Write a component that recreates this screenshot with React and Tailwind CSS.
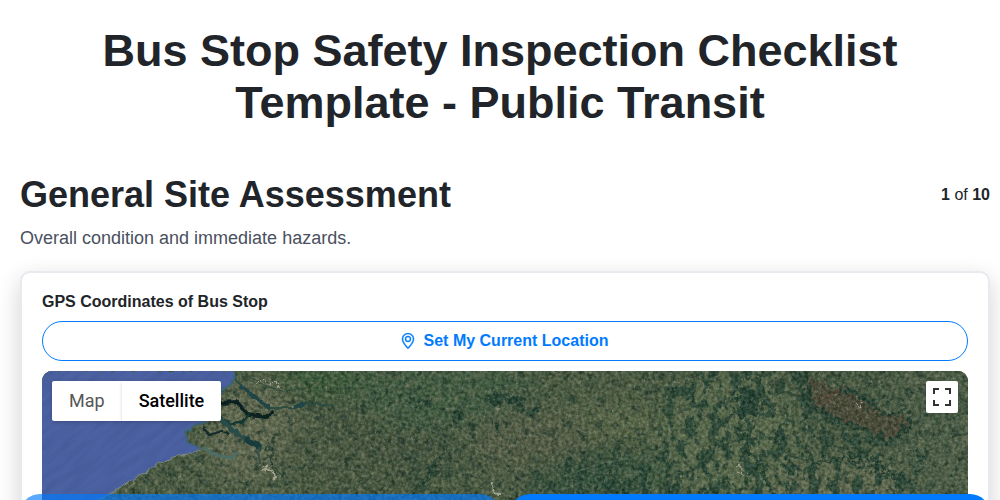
import React from 'react'
import { useState } from "react";
import { BsGeoAlt } from "react-icons/bs";

const SatelliteImage = () => {
  return (
    <svg
      className="block h-full w-full"
      viewBox="0 0 926 400"
      preserveAspectRatio="xMidYMin slice"
      aria-hidden="true"
    >
      <defs>
        {/* woods, fields, towns and grain, each one cut from noise */}
        <filter id="woods" x="0" y="0" width="100%" height="100%" colorInterpolationFilters="sRGB">
          <feTurbulence type="fractalNoise" baseFrequency="0.11 0.12" numOctaves="4" seed="7" />
          <feColorMatrix values="0 0 0 0 0.13  0 0 0 0 0.22  0 0 0 0 0.18  9 0 0 0 -5.2" />
        </filter>
        <filter id="deepWoods" x="0" y="0" width="100%" height="100%" colorInterpolationFilters="sRGB">
          <feTurbulence type="fractalNoise" baseFrequency="0.09 0.065" numOctaves="4" seed="32" />
          <feColorMatrix values="0 0 0 0 0.1  0 0 0 0 0.23  0 0 0 0 0.19  14 0 0 0 -7.2" />
        </filter>
        <filter id="fields" x="0" y="0" width="100%" height="100%" colorInterpolationFilters="sRGB">
          <feTurbulence type="fractalNoise" baseFrequency="0.12" numOctaves="4" seed="21" />
          <feColorMatrix values="0 0 0 0 0.43  0 0 0 0 0.45  0 0 0 0 0.34  0 5 0 0 -2.4" />
        </filter>
        <filter id="grain" x="0" y="0" width="100%" height="100%" colorInterpolationFilters="sRGB">
          <feTurbulence type="fractalNoise" baseFrequency="0.3" numOctaves="3" seed="3" />
          <feColorMatrix values="1.3 0 0 0 -0.37  1.2 0.1 0 0 -0.31  1.2 0 0.1 0 -0.39  0 0 0 0 0.26" />
        </filter>
        <filter id="towns" x="0" y="0" width="100%" height="100%" colorInterpolationFilters="sRGB">
          <feTurbulence type="fractalNoise" baseFrequency="0.22" numOctaves="3" seed="11" />
          <feColorMatrix values="0 0 0 0 0.56  0 0 0 0 0.54  0 0 0 0 0.48  0 0 8 0 -5.5" />
        </filter>
        <filter id="waves" x="0" y="0" width="100%" height="100%" colorInterpolationFilters="sRGB">
          <feTurbulence type="fractalNoise" baseFrequency="0.03 0.16" numOctaves="3" seed="5" />
          <feColorMatrix values="0 0 0 0 0.22  0 0 0 0 0.3  0 0 0 0 0.52  2 0 0 0 -0.8" />
        </filter>
        <filter id="rough" x="-10%" y="-10%" width="120%" height="120%" colorInterpolationFilters="sRGB">
          <feTurbulence type="fractalNoise" baseFrequency="0.14" numOctaves="3" seed="9" result="n" />
          <feDisplacementMap in="SourceGraphic" in2="n" scale="18" xChannelSelector="R" yChannelSelector="G" />
        </filter>
        <filter id="coast" x="-10%" y="-10%" width="120%" height="120%" colorInterpolationFilters="sRGB">
          <feTurbulence type="fractalNoise" baseFrequency="0.15" numOctaves="2" seed="4" result="n" />
          <feDisplacementMap in="SourceGraphic" in2="n" scale="5" xChannelSelector="R" yChannelSelector="G" />
        </filter>
        <filter id="soft" x="-20%" y="-20%" width="140%" height="140%">
          <feGaussianBlur stdDeviation="12" />
        </filter>
        <clipPath id="sea">
          <path d="M0 0H190L193 7L188 14L180 20L172 35L166 50L151 55L143 62L146 71L158 78L150 82L131 86L118 92L98 104L75 119L60 127L0 165Z" />
        </clipPath>
        {/* where the forests are thick */}
        <mask id="forests" maskUnits="userSpaceOnUse" x="0" y="0" width="926" height="400">
          <g filter="url(#soft)">
            <path d="M625 -20H775L790 40L850 70L880 120V200H620L600 100Z" fill="#fff" />
            <path d="M500 95L560 80H640V200H450Z" fill="#fff" />
            <ellipse cx="820" cy="40" rx="60" ry="30" fill="#999" />
            <ellipse cx="390" cy="105" rx="30" ry="40" fill="#888" />
          </g>
        </mask>
      </defs>

      <rect width="926" height="400" fill="#4a5b43" />
      <g filter="url(#soft)">
        <ellipse cx="290" cy="8" rx="60" ry="14" fill="#315a35" />
        <ellipse cx="210" cy="60" rx="50" ry="50" fill="#6b6f56" />
        <ellipse cx="330" cy="80" rx="90" ry="50" fill="#46563f" />
        <ellipse cx="400" cy="20" rx="90" ry="40" fill="#3f5c43" />
        <ellipse cx="490" cy="70" rx="60" ry="30" fill="#585f4a" />
        <ellipse cx="570" cy="110" rx="80" ry="28" fill="#35533d" />
        <ellipse cx="590" cy="50" rx="60" ry="14" fill="#626e4b" />
        <ellipse cx="690" cy="70" rx="70" ry="70" fill="#5d6e50" />
        <ellipse cx="800" cy="115" rx="70" ry="30" fill="#686f54" />
        <ellipse cx="890" cy="60" rx="50" ry="70" fill="#4e5f4a" />
      </g>
      <rect width="926" height="400" filter="url(#fields)" opacity="0.45" />
      <rect width="926" height="400" filter="url(#woods)" opacity="0.6" />
      <g mask="url(#forests)">
        <rect width="926" height="400" filter="url(#deepWoods)" opacity="0.75" />
      </g>

      <g filter="url(#rough)">
        <path d="M763 5L795 18L820 30L848 42L868 48L866 60L848 66L828 62L800 50L775 40L764 28Z" fill="#4c4838" opacity="0.95" />
        <g fill="none" stroke="#1c3b30" strokeLinecap="round" opacity="0.85">
          <path d="M765 5L768 35L800 52L830 62L845 70L862 62L866 50" strokeWidth="5" />
          <path d="M800 18L820 25L835 38L850 44L862 40" strokeWidth="6" />
          <path d="M696 26L706 24L714 30L712 38L698 40" strokeWidth="12" />
          <path d="M694 55L702 70L708 82L720 95L728 118" strokeWidth="5" />
          <path d="M740 50L738 70L745 85L775 90L800 88L825 96L850 106" strokeWidth="3" />
          <path d="M805 83L830 88L850 102L868 112" strokeWidth="3" />
          <path d="M870 78L880 90L876 100" strokeWidth="3" />
          <path d="M366 22L378 34L388 31" strokeWidth="4" />
          <path d="M447 30L460 26L480 30M482 39L492 40" strokeWidth="7" />
          <path d="M412 42L422 45M452 50L455 60" strokeWidth="5" />
          <path d="M395 90L384 110L372 125" strokeWidth="4" />
          <path d="M225 72L232 95L245 115" strokeWidth="3" />
        </g>
        <path d="M775 34L795 20L806 16" fill="none" stroke="#5e4638" strokeWidth="2" />
      </g>
      <path d="M520 106L560 92L610 84L660 64" fill="none" stroke="#5d7059" strokeWidth="1" opacity="0.6" />

      <rect width="926" height="400" filter="url(#towns)" opacity="0.6" />
      <rect width="926" height="400" filter="url(#grain)" />

      <g filter="url(#coast)">
        <g fill="none" strokeLinecap="round" strokeLinejoin="round">
          <path d="M192 2L198 14L211 24L228 37L251 37L263 32L290 35" stroke="#2c4d40" strokeWidth="2" />
          <path d="M199 15L212 26L227 36M252 36L261 33" stroke="#1f4546" strokeWidth="4" />
          <path d="M205 5L222 14L240 20L262 18" stroke="#2d4a3b" strokeWidth="1" />
          <path d="M178 32L195 31L206 44L225 46L231 41" stroke="#0b211f" strokeWidth="4" />
          <path d="M206 44L201 51L188 53L178 46" stroke="#123631" strokeWidth="3" />
          <path d="M176 46L191 59L205 69L217 77" stroke="#284c4a" strokeWidth="5" />
          <path d="M206 69L216 75" stroke="#183b3d" strokeWidth="7" />
          <path d="M161 57L168 64L180 60L188 63" stroke="#132b2a" strokeWidth="2" />
          <path d="M162 77L174 84L188 87L196 82" stroke="#4b6f68" strokeWidth="3" />
          <path d="M216 77L218 92" stroke="#35504a" strokeWidth="2" />
        </g>
        <path d="M0 0H190L193 7L188 14L180 20L172 35L166 50L151 55L143 62L146 71L158 78L150 82L131 86L118 92L98 104L75 119L60 127L0 165H-10V-10H190Z" fill="#4c61a1" />
        <path d="M190 0L193 7L188 14L180 20M166 50L151 55L143 62L146 71L158 78" fill="none" stroke="#3c6673" strokeWidth="2" />
        <path d="M158 78L150 82L131 86L118 92L98 104L75 119L60 127L0 165" fill="none" stroke="#7f8d80" strokeWidth="1" />
      </g>
      <g clipPath="url(#sea)">
        <g transform="rotate(-40 60 60)">
          <rect x="-120" y="-120" width="420" height="360" filter="url(#waves)" opacity="0.3" />
        </g>
      </g>

      <g filter="url(#rough)" fill="none" stroke="#a5a493" strokeLinecap="round" strokeDasharray="1 3">
        <path d="M218 99L224 96L230 102L235 108" strokeWidth="3" />
        <path d="M215 9L225 13L236 12" strokeWidth="2" />
        <path d="M450 112L455 122" strokeWidth="3" />
        <path d="M698 98L704 104" strokeWidth="2" />
        <path d="M815 32L822 34" strokeWidth="2" />
      </g>
    </svg>
  )
}

const LocationMap = () => {
  const [mapType, setMapType] = useState("satellite");

  return (
    <div className="relative mt-2.5 h-[400px] overflow-hidden rounded-[10px] bg-[#495b43]">
      <SatelliteImage />
      <div className="absolute left-2.5 top-2.5 flex h-10 overflow-hidden rounded-xs bg-white font-[Roboto,sans-serif] text-lg leading-[30px] shadow-[0_1px_4px_-1px_rgba(0,0,0,0.3)]">
        <button
          type="button"
          className={`px-[17px] ${mapType == "map" ? "font-medium text-black" : "text-[#565656]"}`}
          onClick={() => setMapType("map")}
        >
          Map
        </button>
        <button
          type="button"
          className={`px-[17px] shadow-[0_1px_4px_-1px_rgba(0,0,0,0.3)] ${mapType == "satellite" ? "font-medium text-black" : "text-[#565656]"}`}
          onClick={() => setMapType("satellite")}
        >
          Satellite
        </button>
      </div>
      <button
        type="button"
        aria-label="Toggle fullscreen view"
        className="absolute right-2.5 top-2.5 flex size-8 items-center justify-center rounded-xs bg-white shadow-[0_1px_4px_-1px_rgba(0,0,0,0.3)]"
      >
        <svg className="size-[18px]" viewBox="0 0 18 18" fill="#333">
          <path d="M0 0v6h2V2h4V0H0zm16 0h-4v2h4v4h2V0h-2zm0 16h-4v2h6v-6h-2v4zM2 12H0v6h6v-2H2v-4z" />
        </svg>
      </button>
    </div>
  )
}

const App = () => {
  const [page, setPage] = useState(1);
  const totalPages = 10;

  return (
    <div className="min-h-screen bg-white pb-16 font-['Liberation_Sans',Arial,sans-serif] text-base text-[#212529]">
      <h1 className="px-5 pt-[25px] text-center text-[45px] leading-[52px] font-bold">
        Bus Stop Safety Inspection Checklist Template - Public Transit
      </h1>

      <main className="pt-11 pr-2.5 pl-5">
        <div className="flex items-center justify-between">
          <h2 className="text-4xl leading-11 font-bold">General Site Assessment</h2>
          <p><b>{page}</b> of <b>{totalPages}</b></p>
        </div>
        <p className="mt-2 text-lg leading-[26px] text-[#4a5060]">Overall condition and immediate hazards.</p>

        <section className="mt-5 rounded-[10px] border-2 border-[#e9e9f0] bg-white px-5 pt-4 pb-5 shadow-[0_8px_24px_rgba(0,0,0,0.18)]">
          <h3 className="leading-[26px] font-bold">GPS Coordinates of Bus Stop</h3>
          <button
            type="button"
            className="mt-1.5 flex h-10 w-full items-center justify-center gap-2 rounded-full border border-[#007bff] pr-0.5 font-bold text-[#007bff]"
          >
            <BsGeoAlt className="size-4 stroke-current stroke-[0.5]" />
            Set My Current Location
          </button>
          <LocationMap />
        </section>
      </main>

      {/* the bar peeks in from the bottom edge */}
      <div className="fixed inset-x-0 top-full -mt-1.5 flex gap-2.5 pr-2.5 pl-5">
        <button
          type="button"
          aria-label="Previous"
          className="h-10 flex-1 rounded-full bg-[#007bff] disabled:opacity-65"
          disabled={page == 1}
          onClick={() => setPage(page - 1)}
        />
        <button
          type="button"
          aria-label="Next"
          className="h-10 flex-1 rounded-full bg-[#007bff] disabled:opacity-65"
          disabled={page == totalPages}
          onClick={() => setPage(page + 1)}
        />
      </div>
    </div>
  )
}

export default App
